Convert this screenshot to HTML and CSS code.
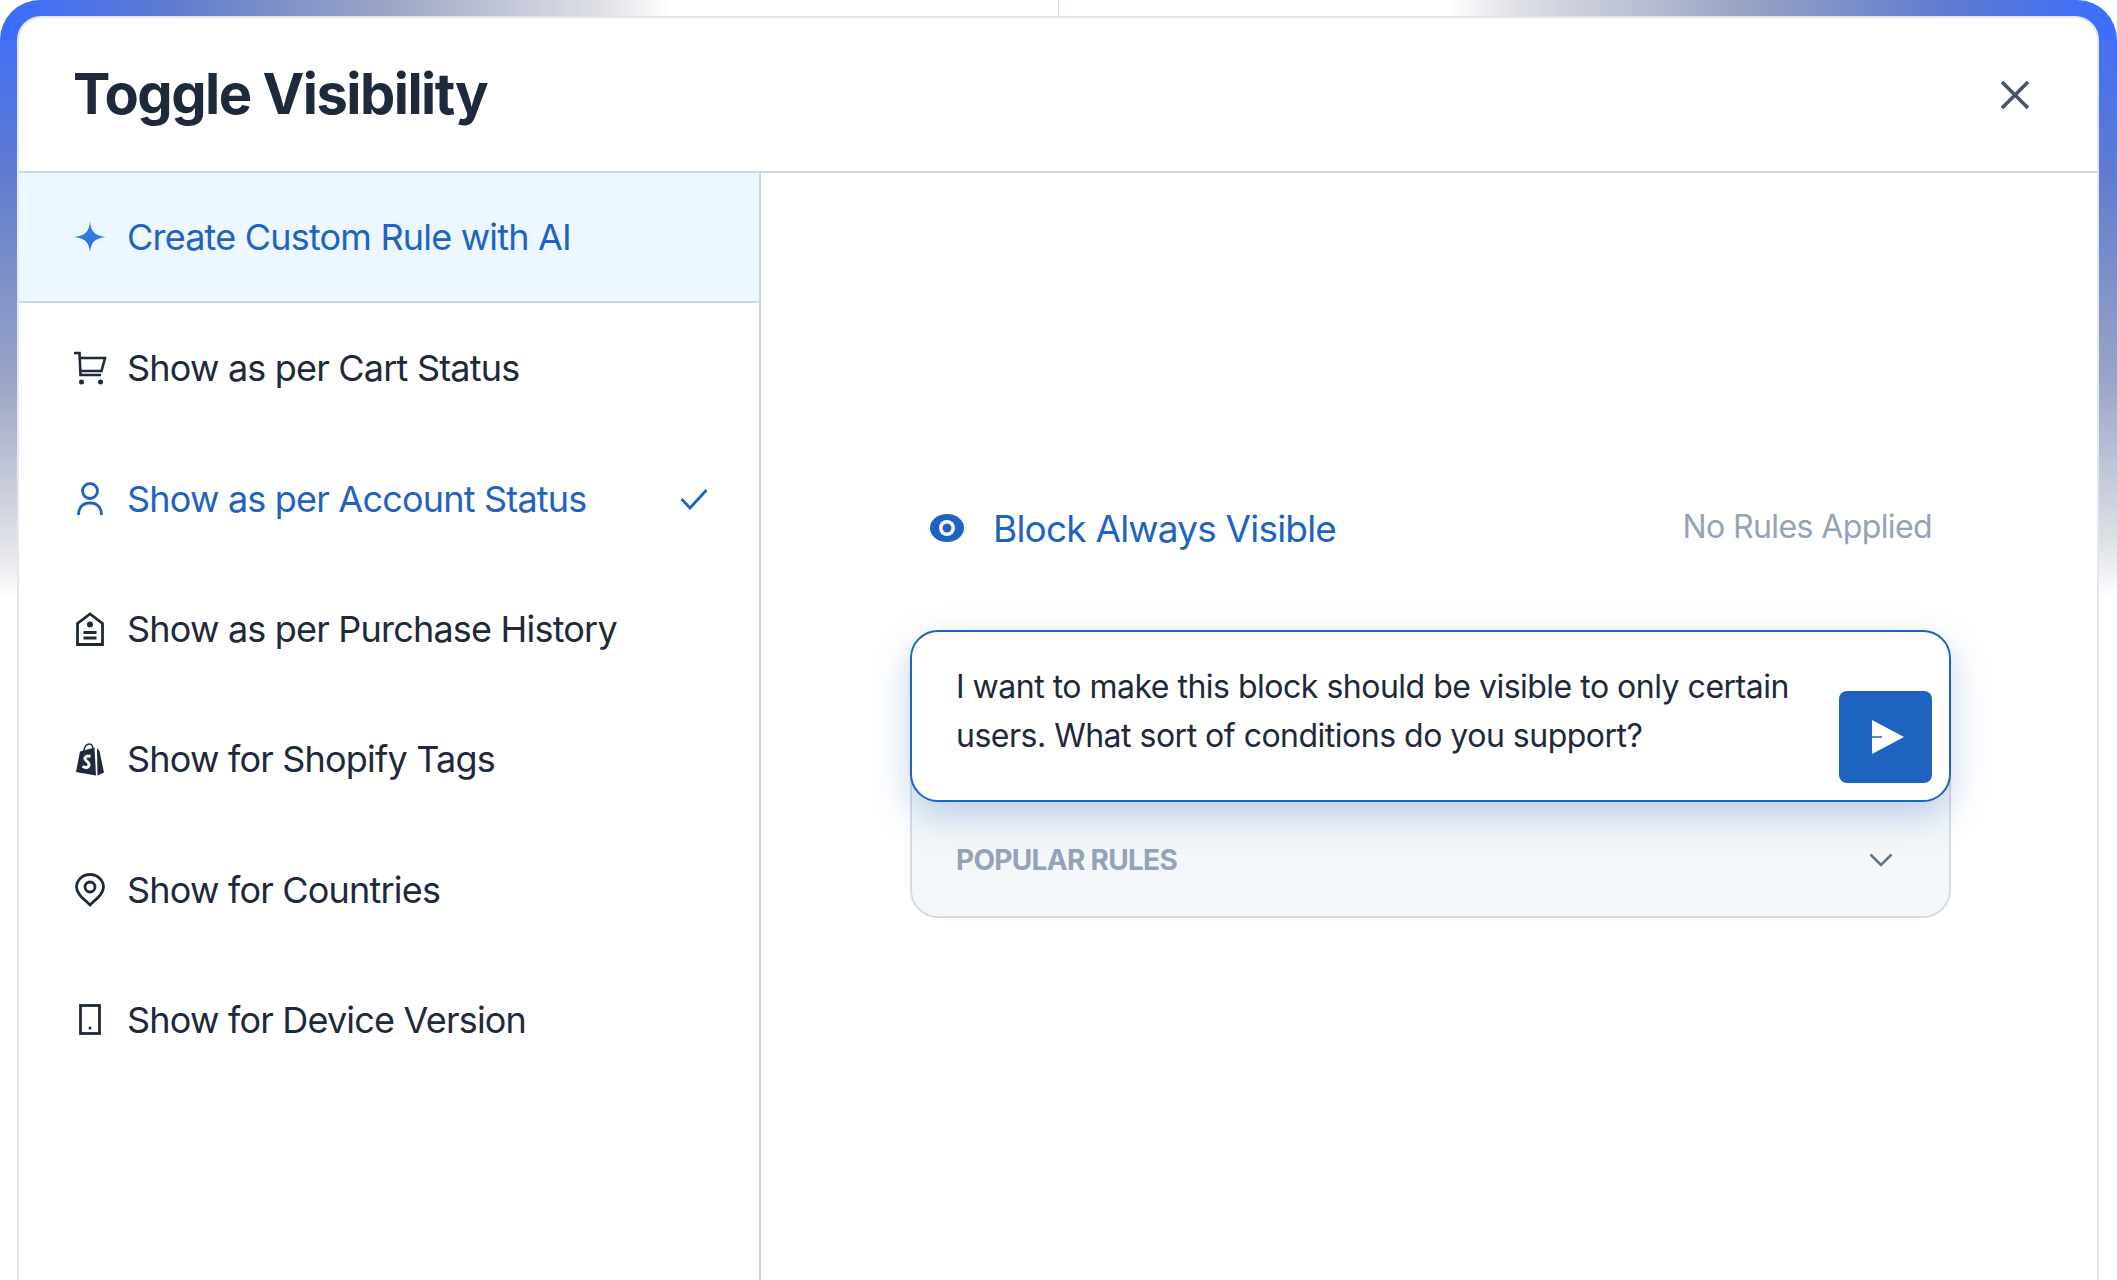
FILE: index.html
```html
<!DOCTYPE html>
<html lang="en">

<head>
  <meta charset="UTF-8" />
  <title>Toggle Visibility</title>
  <link rel="stylesheet" href="styles.css">
</head>

<body>
  <div class="frame">
    <div class="panel">
      <header class="panel-head">
        <h1>Toggle Visibility</h1>
        <button class="close-btn" title="Close">
          <svg width="30" height="30" viewBox="0 0 30 30" fill="none" stroke="#475569" stroke-width="3.6">
            <path d="M2 2 28 28M28 2 2 28" />
          </svg>
        </button>
      </header>

      <div class="panel-body">
        <nav class="sidebar">
          <a class="rule-item ai">
            <span class="rule-icon">
              <svg width="32" height="32" viewBox="0 0 32 32" fill="#2f7be0">
                <path d="M16 .5C17 10 20 14.5 31.5 16 20 17.500 17 22 16 31.500 15 22 12 17.500 .5 16 12 14.500 15 10 16 .5Z" />
              </svg>
            </span>
            Create Custom Rule with AI
          </a>
          <a class="rule-item">
            <span class="rule-icon">
              <svg width="34" height="34" viewBox="0 0 34 34" fill="none" stroke="#1e293b" stroke-width="2.600">
                <path d="M1 2H6.500L7.500 24H28" />
                <path d="M7 7H32L28.500 20H7.500" />
                <circle cx="8.500" cy="31" r="2.500" fill="#1e293b" stroke="none" />
                <circle cx="27.500" cy="31" r="2.500" fill="#1e293b" stroke="none" />
              </svg>
            </span>
            Show as per Cart Status
          </a>
          <a class="rule-item selected">
            <span class="rule-icon">
              <svg width="26" height="34" viewBox="0 0 26 34" fill="none" stroke="#1f63c0" stroke-width="2.800">
                <circle cx="13" cy="9" r="7.500" />
                <path d="M1.500 33C1.500 25 6 21 13 21S24.500 25 24.500 33" />
              </svg>
            </span>
            Show as per Account Status
            <svg class="rule-check" width="28" height="22" viewBox="0 0 28 22" fill="none" stroke="#1f63c0" stroke-width="2.800">
              <path d="M1.500 11 10 20 26.500 2" />
            </svg>
          </a>
          <a class="rule-item">
            <span class="rule-icon">
              <svg width="28" height="34" viewBox="0 0 28 34" fill="none" stroke="#1e293b" stroke-width="2.800">
                <path d="M1.500 32.500V11.500L14 2 26.500 11.500V32.500Z" />
                <circle cx="14" cy="12.500" r="3" fill="#1e293b" stroke="none" />
                <path d="M7.500 20.500H20.500M7.500 26H20.500" />
              </svg>
            </span>
            Show as per Purchase History
          </a>
          <a class="rule-item">
            <span class="rule-icon">
              <svg width="28" height="33" viewBox="0 0 28 33" fill="#1e293b">
                <path d="M0 29 4 8.500 18.500 4.500 20 32.500Z" />
                <path d="M21 5 23.500 8 28 29.500 21.500 32.500Z" />
                <path d="M8 8C8.500 3 11 1 13.500 1S17 4 17 7" fill="none" stroke="#1e293b" stroke-width="1.400" />
                <path d="M14.500 13.500C11 12 8.500 14 9 16S13.500 19 13 22 9.500 25 6.500 23.500" fill="none" stroke="#fff" stroke-width="3" />
              </svg>
            </span>
            Show for Shopify Tags
          </a>
          <a class="rule-item">
            <span class="rule-icon">
              <svg width="30" height="34" viewBox="0 0 30 34" fill="none" stroke="#1e293b" stroke-width="2.800">
                <path d="M15 32C9 26 1.500 21 1.500 14A13.500 12.500 0 0 1 28.500 14C28.500 21 21 26 15 32Z" />
                <circle cx="15" cy="14" r="5" />
              </svg>
            </span>
            Show for Countries
          </a>
          <a class="rule-item">
            <span class="rule-icon">
              <svg width="22" height="31" viewBox="0 0 22 31" fill="none" stroke="#1e293b" stroke-width="2.800">
                <rect x="1.500" y="1.500" width="19" height="28" />
                <circle cx="11" cy="24" r="1.500" fill="#1e293b" stroke="none" />
              </svg>
            </span>
            Show for Device Version
          </a>
        </nav>

        <main class="rule-main">
          <div class="status-row">
            <svg width="34" height="28" viewBox="0 0 34 28">
              <ellipse cx="17" cy="14" rx="17" ry="14" fill="#1f63c0" />
              <circle cx="17" cy="14" r="8" fill="#fff" />
              <circle cx="17" cy="14" r="4.500" fill="#1f63c0" />
            </svg>
            <span class="status-label">Block Always Visible</span>
            <span class="status-note">No Rules Applied</span>
          </div>

          <div class="prompt-box">
            <p>I want to make this block should be visible to only certain users. What sort of conditions do you support?</p>
            <button class="send-btn" title="Send">
              <svg width="32" height="34" viewBox="0 0 32 34">
                <path d="M0 0 32 17 0 34Z" fill="#fff" />
                <path d="M0 17H10" stroke="#1f63c0" stroke-width="1.500" />
              </svg>
            </button>
          </div>

          <div class="popular-rules">
            <span>POPULAR RULES</span>
            <svg width="24" height="14" viewBox="0 0 24 14" fill="none" stroke="#64748b" stroke-width="2.600">
              <path d="M1.500 1.500 12 12 22.500 1.500" />
            </svg>
          </div>
        </main>
      </div>
    </div>
  </div>
</body>

</html>
```

FILE: styles.css
```css
* {
  box-sizing: border-box;
}

html,
body {
  margin: 0;
  padding: 0;
  height: 100%;
  background: #fff;
  font-family: Inter, "Noto Sans", sans-serif;
  color: #1e293b;
  overflow: hidden;
}

.frame {
  height: 1280px;
  padding: 16px 18px 0 17px;
  border-radius: 40px 40px 0 0;
  background:
    linear-gradient(to right, #3a6cff 0, #5f7bd0 170px, #9aa4c4 380px, #dfe0e6 600px, #fff 670px) 0 0 / 50% 40px no-repeat,
    linear-gradient(to left, #3a6cff 0, #5f7bd0 170px, #9aa4c4 380px, #dfe0e6 600px, #fff 670px) 100% 0 / 50% 40px no-repeat,
    linear-gradient(to bottom, #3a6cff 0, #5f7bd0 170px, #9aa4c4 380px, #dfe0e6 540px, #fff 600px) 0 0 / 50% 100% no-repeat,
    linear-gradient(to bottom, #3a6cff 0, #5f7bd0 170px, #9aa4c4 380px, #dfe0e6 540px, #fff 600px) 100% 0 / 50% 100% no-repeat;
}

.panel {
  height: 100%;
  display: flex;
  flex-direction: column;
  background: #fff;
  border: 2px solid #e2e8f0;
  border-bottom: none;
  border-radius: 24px 24px 0 0;
}

.panel-head {
  height: 155px;
  flex-shrink: 0;
  display: flex;
  align-items: center;
  justify-content: space-between;
  padding: 0 67px 0 54px;
  border-bottom: 2px solid #cbd9e4;
}

.panel-head h1 {
  margin: 0 0 2px;
  font-size: 56px;
  font-weight: 700;
  letter-spacing: -1.500px;
  color: #1e293b;
}

.close-btn {
  display: flex;
  padding: 0;
  border: none;
  background: none;
  cursor: pointer;
}

.panel-body {
  flex: 1;
  display: flex;
  min-height: 0;
}

.sidebar {
  width: 742px;
  flex-shrink: 0;
  border-right: 2px solid #cbd9e4;
}

.rule-item {
  height: 130.300px;
  display: flex;
  align-items: center;
  gap: 17px;
  padding: 0 51px;
  font-size: 36px;
  letter-spacing: -0.800px;
  color: #1e293b;
  white-space: nowrap;
}

.rule-item.ai {
  background: #ecf7ff;
  border-bottom: 2px solid #cbd9e4;
  color: #1f63c0;
}

.rule-item.selected {
  color: #1f63c0;
}

.rule-icon {
  width: 40px;
  display: flex;
  justify-content: center;
  flex-shrink: 0;
}

.rule-check {
  margin-left: auto;
}

.rule-main {
  flex: 1;
  padding: 330px 0 0 149px;
}

.status-row {
  width: 1041px;
  display: flex;
  align-items: center;
  padding: 0 19px 0 20px;
  height: 50px;
}

.status-label {
  margin-left: 29px;
  font-size: 37px;
  letter-spacing: -0.800px;
  color: #1f63c0;
}

.status-note {
  margin-left: auto;
  margin-bottom: 4px;
  font-size: 32px;
  letter-spacing: -0.600px;
  color: #94a3b8;
}

.prompt-box {
  position: relative;
  z-index: 1;
  width: 1041px;
  height: 172px;
  margin-top: 77px;
  display: flex;
  align-items: flex-end;
  justify-content: space-between;
  padding: 0 17px 17px 44px;
  background: #fff;
  border: 2px solid #1f63c0;
  border-radius: 28px;
  box-shadow: 0 14px 36px rgba(31, 99, 192, 0.28);
}

.prompt-box p {
  width: 870px;
  margin: 0 0 0;
  padding-bottom: 23px;
  font-size: 32px;
  line-height: 49px;
  letter-spacing: -0.500px;
  color: #1e293b;
}

.send-btn {
  width: 93px;
  height: 92px;
  flex-shrink: 0;
  display: flex;
  align-items: center;
  justify-content: center;
  padding: 0 0 0 4px;
  border: none;
  border-radius: 8px;
  background: #1f63c0;
  cursor: pointer;
}

.popular-rules {
  width: 1041px;
  height: 148px;
  margin-top: -32px;
  display: flex;
  align-items: center;
  justify-content: space-between;
  padding: 32px 56px 0 44px;
  background: #f4f7f9;
  border: 2px solid #d5dbe5;
  border-radius: 0 0 28px 28px;
  font-size: 28px;
  font-weight: 700;
  letter-spacing: -0.700px;
  color: #94a3b8;
}
```
